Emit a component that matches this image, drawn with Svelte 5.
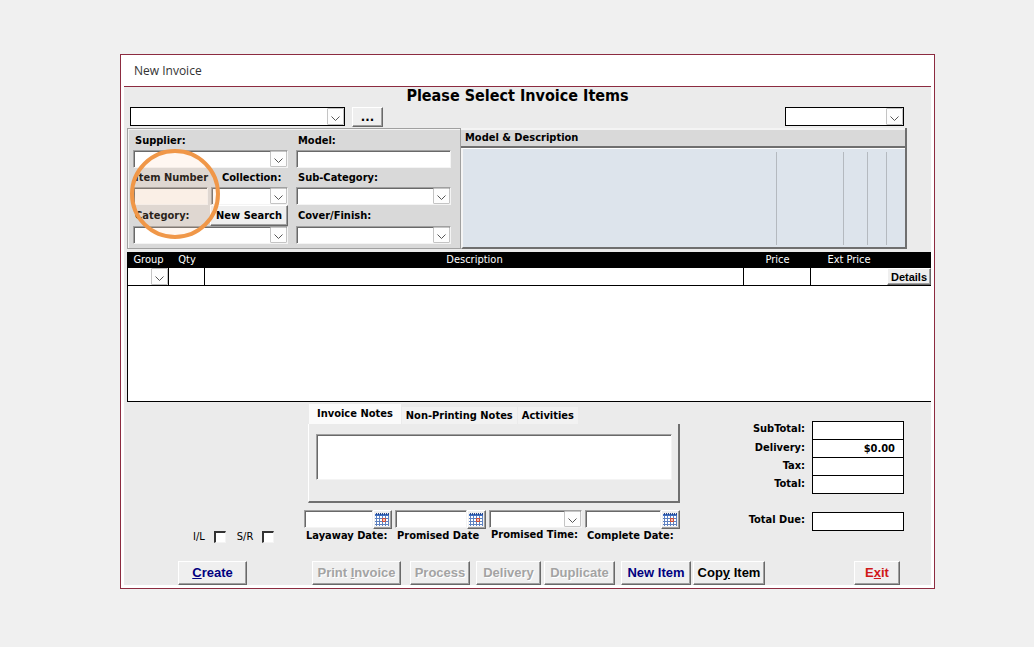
<script lang="ts">
	type Action = { label: string; key?: string; kind?: string; disabled?: boolean };

	const actions: Action[] = [
		{ label: 'Create', key: 'C', kind: 'create' },
		{ label: 'Print Invoice', key: 'I', kind: 'print', disabled: true },
		{ label: 'Process', kind: 'process', disabled: true },
		{ label: 'Delivery', kind: 'delivery', disabled: true },
		{ label: 'Duplicate', kind: 'duplicate', disabled: true },
		{ label: 'New Item', kind: 'new' },
		{ label: 'Copy Item', key: 'y', kind: 'copy' },
		{ label: 'Exit', key: 'x', kind: 'exit' }
	];

	const tabs = ['Invoice Notes', 'Non-Printing Notes', 'Activities'];
	let activeTab = $state(0);

	const totals = [
		{ id: 'subtotal', label: 'SubTotal:', value: '' },
		{ id: 'delivery', label: 'Delivery:', value: '$0.00' },
		{ id: 'tax', label: 'Tax:', value: '' },
		{ id: 'total', label: 'Total:', value: '' }
	];

	const dates = [
		{ id: 'layaway', label: 'Layaway Date:', time: false },
		{ id: 'promised', label: 'Promised Date', time: false },
		{ id: 'time', label: 'Promised Time:', time: true },
		{ id: 'complete', label: 'Complete Date:', time: false }
	];

	// splits a caption around its access key so the key can be underlined
	function parts(a: Action): string[] {
		if (!a.key) return [a.label, '', ''];
		const i = a.label.indexOf(a.key);
		return [a.label.slice(0, i), a.key, a.label.slice(i + 1)];
	}
</script>

{#snippet combo(id: string, label: string, kind: string)}
	<span class="combo {kind}">
		<select {id} aria-label={label || null}></select>
		<span class="arrow" aria-hidden="true">
			<svg viewBox="0 0 9 5"><path d="M0.5 0.5 4.5 4.5 8.5 0.5" /></svg>
		</span>
	</span>
{/snippet}

{#snippet calendar()}
	<svg class="calendar" viewBox="0 0 16 15" aria-hidden="true">
		<rect x="1" y="2" width="14" height="12" fill="#fff" />
		<rect x="1" y="2" width="14" height="2" fill="#3f6fc4" />
		<path d="M2.5 1v2M4.5 1v2M6.5 1v2M8.5 1v2M10.5 1v2M12.5 1v2M14.5 1v2" stroke="#27498f" />
		<path d="M1 6.5h14M1 9.5h14M1 12.5h14M2.5 4v10M5.5 4v10M8.5 4v10M11.5 4v10M14.5 4v10" stroke="#5f82c0" />
		<path d="M8.5 6.5h3v3h-3z" fill="#f3c6b8" stroke="#cf4a35" />
	</svg>
{/snippet}

<main class="window">
	<header class="titlebar">New Invoice</header>

	<form class="body" onsubmit={(e) => e.preventDefault()}>
		<h1>Please Select Invoice Items</h1>

		<div class="picker">
			{@render combo('customer', 'Customer', 'flat wide')}
			<button type="button" class="raised more">...</button>
			{@render combo('location', 'Location', 'flat short')}
		</div>

		<div class="top">
			<section class="search">
				<div class="column">
					<label for="supplier">Supplier:</label>
					{@render combo('supplier', '', 'sunken')}
					<div class="pair">
						<div class="column narrow">
							<label for="item">Item Number</label>
							<input id="item" class="sunken item" />
						</div>
						<div class="column">
							<label class="inset" for="collection">Collection:</label>
							{@render combo('collection', '', 'sunken')}
						</div>
					</div>
					<div class="pair">
						<label class="tall" for="category">Category:</label>
						<button type="button" class="raised find">New Search</button>
					</div>
					{@render combo('category', '', 'sunken')}
				</div>
				<div class="column">
					<label for="model">Model:</label>
					<input id="model" class="sunken" />
					<label for="subcategory">Sub-Category:</label>
					{@render combo('subcategory', '', 'sunken')}
					<label class="tall" for="cover">Cover/Finish:</label>
					{@render combo('cover', '', 'sunken')}
				</div>
				<span class="highlight" aria-hidden="true"></span>
			</section>

			<section class="models">
				<h2>Model &amp; Description</h2>
				<div class="list"><i></i><i></i><i></i><i></i><i></i></div>
			</section>
		</div>

		<div class="items">
			<table>
				<thead>
					<tr>
						<th class="group">Group</th>
						<th class="qty">Qty</th>
						<th>Description</th>
						<th class="price">Price</th>
						<th class="ext">Ext Price</th>
						<th class="details"></th>
					</tr>
				</thead>
				<tbody>
					<tr>
						<td>{@render combo('group', 'Group', 'plain')}</td>
						<td><input aria-label="Qty" /></td>
						<td><input aria-label="Description" /></td>
						<td><input aria-label="Price" /></td>
						<td class="open"><input aria-label="Ext Price" /></td>
						<td class="open"><button type="button" class="raised detail">Details</button></td>
					</tr>
				</tbody>
			</table>
		</div>

		<div class="bottom">
			<div class="flags">
				<label>I/L <input type="checkbox" /></label>
				<label>S/R <input type="checkbox" /></label>
			</div>

			<div class="middle">
				<div class="tabs" role="tablist">
					{#each tabs as tab, i}
						<button
							type="button"
							role="tab"
							class:active={i === activeTab}
							aria-selected={i === activeTab}
							onclick={() => (activeTab = i)}>{tab}</button
						>
					{/each}
				</div>
				<div class="notes">
					<textarea class="sunken" aria-label={tabs[activeTab]}></textarea>
				</div>
				<div class="dates">
					{#each dates as date}
						<div class="date">
							<div class="entry">
								{#if date.time}
									{@render combo(date.id, '', 'sunken')}
								{:else}
									<input id={date.id} class="sunken" />
									<button type="button" class="raised pick" aria-label="Pick {date.label}">
										{@render calendar()}
									</button>
								{/if}
							</div>
							<label for={date.id}>{date.label}</label>
						</div>
					{/each}
				</div>
			</div>

			<div class="totals">
				{#each totals as row}
					<div class="total">
						<label for={row.id}>{row.label}</label>
						<input id={row.id} value={row.value} />
					</div>
				{/each}
				<div class="total due">
					<label for="due">Total Due:</label>
					<input id="due" />
				</div>
			</div>
		</div>

		<div class="actions">
			{#each actions as action}
				{@const [before, key, after] = parts(action)}
				<button type="button" class="raised action {action.kind}" disabled={action.disabled}
					>{before}{#if key}<u>{key}</u>{/if}{after}</button
				>
			{/each}
		</div>
	</form>
</main>

<style>
	:global(body) {
		margin: 0;
		background: #f0f0f0;
	}

	.window {
		display: flow-root;
		margin: 54px 99px 58px 120px;
		padding: 0 3px 3px;
		min-width: 807px;
		border: 1px solid #8c2b40;
		background: #fff;
		color: #000;
		font: bold 11px/14px 'DejaVu Sans Condensed', 'DejaVu Sans', sans-serif;
	}

	.window :is(*, *::before, *::after) {
		box-sizing: border-box;
	}

	button,
	input,
	select,
	textarea {
		margin: 0;
		padding: 0;
		border: 0;
		border-radius: 0;
		background: #fff;
		color: inherit;
		font: inherit;
		appearance: none;
	}

	input,
	select,
	textarea {
		display: block;
		width: 100%;
		min-width: 0;
	}

	.titlebar {
		padding: 0 10px;
		border-bottom: 1px solid #8c2b40;
		color: #333;
		font: 12px/31px 'Open Sans', 'Noto Sans', sans-serif;
	}

	.body {
		background: #ebebeb;
	}

	h1 {
		margin: 0;
		padding-right: 20px;
		font-size: 16px;
		line-height: 18px;
		text-align: center;
	}

	.combo {
		position: relative;
		display: block;
		height: 18px;
		background: #fff;
	}

	.combo select {
		height: 100%;
		background: transparent;
	}

	.arrow {
		position: absolute;
		inset: 0 0 0 auto;
		display: grid;
		place-items: center;
		width: 17px;
		border: 1px solid #c4c4c4;
		border-radius: 1px;
		background: #fdfdfd;
		pointer-events: none;
	}

	.arrow svg {
		width: 9px;
		height: 5px;
		margin-top: 3px;
		fill: none;
		stroke: #555;
	}

	.sunken {
		height: 18px;
		border: 1px solid;
		border-color: #a0a0a0 #f4f4f4 #f4f4f4 #a0a0a0;
		box-shadow: inset 1px 1px #696969;
	}

	.flat {
		height: 19px;
		border: 1px solid #000;
	}

	.raised {
		border: 1px solid;
		border-color: #fff #696969 #696969 #fff;
		background: #efefef;
		box-shadow: inset -1px -1px #a0a0a0;
	}

	.picker {
		display: flex;
		padding: 2px 27px 1px 6px;
	}

	.wide {
		width: 215px;
	}

	.short {
		width: 119px;
		margin-left: auto;
	}

	.more {
		width: 31px;
		height: 20px;
		margin-left: 7px;
		font-size: 13px;
		line-height: 16px;
	}

	.top {
		display: flex;
		padding: 0 24px 3px 3px;
	}

	.search {
		position: relative;
		display: flex;
		gap: 8px;
		width: 334px;
		padding: 2px 9px 4px 5px;
		border: 1px solid #a0a0a0;
		background: #d9d9d9;
		box-shadow: inset 1px 1px #f4f4f4;
	}

	.column {
		flex: 1;
		min-width: 0;
	}

	.search .narrow {
		flex: none;
		width: 75px;
	}

	.search label {
		display: block;
		padding-left: 2px;
		line-height: 19px;
		white-space: nowrap;
	}

	.search .tall {
		line-height: 21px;
	}

	.search .inset {
		padding-left: 11px;
	}

	.pair {
		display: flex;
		justify-content: space-between;
		gap: 3px;
	}

	.item {
		background: #f9f6f2;
	}

	.find {
		width: 78px;
		height: 21px;
		white-space: nowrap;
	}

	.highlight {
		position: absolute;
		top: 20px;
		left: 2px;
		width: 90px;
		height: 90px;
		border: 4px solid #f09748;
		border-radius: 50%;
		background: rgb(255 205 170 / 0.16);
		pointer-events: none;
	}

	.models {
		display: flex;
		flex: 1;
		flex-direction: column;
		border-right: 2px solid #6f6f6f;
	}

	h2 {
		margin: 0;
		padding-left: 4px;
		border-top: 2px solid #f4f4f4;
		border-bottom: 2px solid #6f6f6f;
		background: #d9d9d9;
		font-size: 11px;
		line-height: 16px;
	}

	.list {
		display: grid;
		flex: 1;
		grid-template-columns: 1fr 67px 24px 19px 19px;
		padding: 3px 0 2px;
		border: solid;
		border-width: 1px 0 2px 2px;
		border-color: #fff #6f6f6f #6f6f6f #f4f4f4;
		background: #dde4ec;
	}

	.list i + i {
		border-left: 1px solid #b4b9bf;
	}

	.items {
		min-height: 150px;
		margin-left: 3px;
		border-bottom: 1px solid #000;
		border-left: 1px solid #000;
		background: #fff;
	}

	table {
		width: 100%;
		border-collapse: separate;
		border-spacing: 0;
		table-layout: fixed;
	}

	th {
		height: 16px;
		padding: 0;
		background: #000;
		color: #fff;
		font-weight: 400;
		line-height: 16px;
	}

	td {
		height: 18px;
		padding: 0;
		border-right: 1px solid #000;
		border-bottom: 1px solid #000;
	}

	td.open {
		border-right: 0;
	}

	td input,
	td .combo {
		height: 17px;
	}

	.group {
		width: 41px;
	}

	.qty {
		width: 36px;
	}

	.price {
		width: 67px;
	}

	.ext {
		width: 76px;
	}

	.details {
		width: 44px;
	}

	.detail {
		display: block;
		width: 100%;
		height: 17px;
		font: bold 11px/14px 'Liberation Sans', Arial, sans-serif;
	}

	.bottom {
		display: flex;
		padding: 2px 27px 18px 0;
	}

	.flags {
		display: flex;
		align-items: flex-end;
		gap: 11px;
		width: 180px;
		padding-left: 69px;
	}

	.flags label {
		display: flex;
		align-items: center;
		gap: 9px;
		font-weight: 400;
		line-height: 12px;
	}

	.flags input {
		width: 12px;
		height: 12px;
		border: solid;
		border-width: 2px 1px 1px 2px;
		border-color: #333 #f4f4f4 #f4f4f4 #333;
	}

	.middle {
		width: 376px;
	}

	.tabs {
		display: flex;
		align-items: flex-end;
		gap: 1px;
		padding-left: 5px;
	}

	.tabs button {
		height: 17px;
		padding: 0 4px;
		background: #f2f2f2;
		white-space: nowrap;
	}

	.tabs .active {
		height: 20px;
		padding: 0 8px;
		background: #fbfbfb;
	}

	.notes {
		margin-left: 4px;
		padding: 10px 6px 21px 7px;
		border: solid;
		border-width: 0 2px 2px 1px;
		border-color: #fff #6f6f6f #6f6f6f #fff;
	}

	.notes textarea {
		height: 46px;
		resize: none;
	}

	.dates {
		display: grid;
		grid-template-columns: 88px 91px 93px 95px;
		gap: 3px;
		padding-top: 7px;
	}

	.entry {
		display: flex;
	}

	.entry .combo {
		flex: 1;
	}

	.date label {
		display: block;
		padding-left: 2px;
		white-space: nowrap;
	}

	.pick {
		flex: none;
		width: 19px;
		height: 19px;
	}

	.calendar {
		display: block;
		width: 16px;
		height: 15px;
	}

	.totals {
		flex: 1;
		padding-top: 17px;
	}

	.total {
		display: flex;
		justify-content: flex-end;
		gap: 7px;
	}

	.total input {
		width: 92px;
		height: 19px;
		padding-right: 8px;
		border: 1px solid #000;
		text-align: right;
	}

	.total + .total input {
		height: 18px;
		border-top: 0;
	}

	.total label {
		line-height: 16px;
	}

	.totals .due {
		padding-top: 18px;
	}

	.totals .due input {
		height: 19px;
		border-top: 1px solid #000;
	}

	.actions {
		display: flex;
		padding: 0 31px 0 54px;
	}

	.action {
		height: 24px;
		font: bold 13px/20px 'Liberation Sans', Arial, sans-serif;
		white-space: nowrap;
	}

	.action:disabled {
		color: #a3a3a3;
		text-shadow: 1px 1px #fff;
	}

	.create {
		width: 69px;
		color: #000080;
	}

	.print {
		width: 89px;
		margin-left: 65px;
	}

	.process {
		width: 60px;
		margin-left: 9px;
	}

	.delivery {
		width: 65px;
		margin-left: 6px;
	}

	.duplicate {
		width: 71px;
		margin-left: 3px;
	}

	.new {
		width: 70px;
		margin-left: 6px;
		color: #000080;
	}

	.copy {
		width: 72px;
		margin-left: 2px;
	}

	.exit {
		width: 46px;
		margin-left: auto;
		color: #d01818;
	}
</style>
